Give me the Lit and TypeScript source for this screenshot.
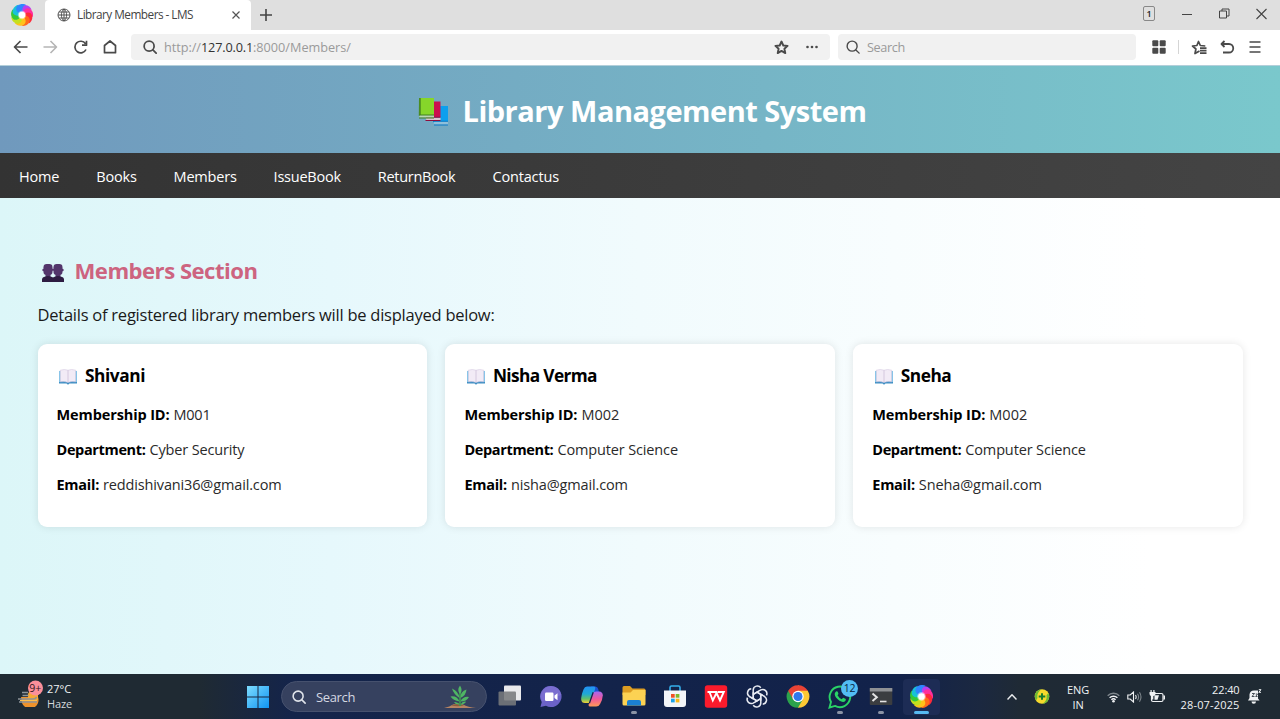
import { LitElement, html, css, svg } from "lit";
import { customElement, property } from "lit/decorators.js";

/** A single line of text whose tracking is adjusted to fill a given width. */
@customElement("fit-text")
class FitText extends LitElement {
  @property() text = "";
  @property({ type: Number }) w = 0;

  static styles = css`
    :host { display: inline-block; white-space: pre; flex: none; }
    .line { display: inline-block; }
  `;

  firstUpdated() {
    const line = this.renderRoot.querySelector(".line") as HTMLElement;
    const natural = line.getBoundingClientRect().width;
    line.style.letterSpacing = `${(this.w - natural) / this.text.length}px`;
  }

  render() {
    return html`<span class="line">${this.text}</span>`;
  }
}

const fit = (text: string, w: number) => html`<fit-text .text=${text} .w=${w}></fit-text>`;

const swirlColors = ["#b840f0", "#ff2f9c", "#ff2a3a", "#ff6a1a", "#ffc21a", "#c4e01e", "#35c93a", "#18c2d8", "#2f86ff"];
const swirl = (size: number) => html`<svg width=${size} height=${size} viewBox="0 0 24 24">
  ${swirlColors.map(
    (c, i) => svg`<path transform="rotate(${i * 40} 12 12)" fill=${c}
      d="M11 9C9 4.500 11.500 1 15.500 1.200c3.500.2 6 2.600 7 5.300-3-1.500-6-.5-7.500 3z"/>`
  )}
  <circle cx="12" cy="12" r="4.600" fill="#fff" fill-opacity=".45"/>
  <circle cx="12" cy="12" r="3.500" fill="#fff"/>
</svg>`;

const magnifier = (size: number, color: string, sw: number) => html`<svg width=${size} height=${size} viewBox="0 0 16 16"
  fill="none" stroke=${color} stroke-width=${sw} stroke-linecap="round"><circle cx="7" cy="7" r="5.700"/><path d="M11.300 11.300l3.700 3.700"/></svg>`;

const line = (w: number, h: number, d: string, color = "#4a4a4a", sw = 1.6) => html`<svg width=${w} height=${h}
  viewBox="0 0 ${w} ${h}" fill="none" stroke=${color} stroke-width=${sw} stroke-linejoin="round"><path d=${d}/></svg>`;

const openBook = html`<svg width="18" height="16" viewBox="0 0 18 16">
  <path d="M0 2h18v12.500h-7.500L9 15.800 7.500 14.500H0z" fill="#3f8fc4"/>
  <path d="M0 2h1v11H0zM17 2h1v11h-1z" fill="#7cc4ea"/>
  <path d="M1.200 1.200Q5.500-.2 9 1.200q3.500-1.400 7.800 0v11.600Q12.500 12 9 13.400 5.500 12 1.200 12.800z" fill="#f2ebf6" stroke="#cfc3dc" stroke-width=".5"/>
  <path d="M9 1.200v12" stroke="#cdbfd9" stroke-width=".8"/>
</svg>`;

const books = html`<svg width="31" height="30" viewBox="0 0 31 30">
  <path d="M15 9h15v15.500H17l-2 1z" fill="#0c9fee"/><path d="M15 24.500h15v3.200H16.500q-1.800-1.600 0-3.200z" fill="#8fbfda"/>
  <path d="M15 24.300h15M16 28h14" stroke="#0a78c4" stroke-width="1.100" fill="none"/>
  <path d="M8 4.500h14.500V20H8z" fill="#cc0f4e"/><path d="M7.500 20.500h15v2.800h-14z" fill="#dcc5d0"/>
  <path d="M8 20.300h14.500M7.500 23.500h15" stroke="#8d0e3c" stroke-width="1.100" fill="none"/>
  <path d="M1.500 1h14.500v17H1z" fill="#86d62a"/><path d="M1 1h1.800v18H.8z" fill="#4b8d22"/>
  <path d="M1.500 18h14.500v2.700H1.500z" fill="#b9d6b4"/><path d="M1 18h15M1 21h15" stroke="#3f7f22" stroke-width="1" fill="none"/>
</svg>`;

const people = html`<svg width="22" height="20" viewBox="0 0 22 20">
  <g fill="#53356b"><rect x="1.500" y="1" width="9" height="11" rx="3.200"/><rect x="11.500" y="1" width="9" height="11" rx="3.200"/>
  <circle cx="1.500" cy="7" r="1.200"/><circle cx="20.500" cy="7" r="1.200"/><path d="M9 5.700h4v2H9zM3.500 10h5v4h-5zM13.500 10h5v4h-5z"/></g>
  <path d="M0 19v-2.500Q0 14 3.500 13.400l2.500-.4 2.500.4q1.700.4 2.500 1 .8-.6 2.500-1l2.500-.4 2.500.4Q22 14 22 16.500V19z" fill="#2e1c42"/>
</svg>`;

const appIcons = {
  taskView: svg`<rect x="7" y="1.500" width="17" height="15" rx="1" fill="#e9eaec"/><rect x="1.500" y="7.500" width="17.500" height="14" rx="1" fill="#777a7c" fill-opacity=".88"/>`,
  chat: svg`<path d="M13 2a10.500 10.500 0 1 1-5 19.700L2.500 23l1.200-5A10.500 10.500 0 0 1 13 2z" fill="#6b62c8"/><path d="M13 2a10.500 10.500 0 0 1 10.300 9L4 17.500A10.500 10.500 0 0 1 13 2z" fill="#8377d6" fill-opacity=".6"/><rect x="7" y="8.500" width="8.500" height="8.500" rx="1.200" fill="#fff"/><path d="M16.500 11.500l3-2.200v7l-3-2.200z" fill="#fff"/>`,
  copilot: svg`<defs><linearGradient id="a" x1="0" y1="0" x2="0" y2="1"><stop stop-color="#2391f5"/><stop offset=".45" stop-color="#1fa9d6"/><stop offset=".75" stop-color="#62c06a"/><stop offset="1" stop-color="#f4cf35"/></linearGradient><linearGradient id="b" x1="0" y1="0" x2="0" y2="1"><stop stop-color="#a767f0"/><stop offset=".5" stop-color="#f0589a"/><stop offset="1" stop-color="#ff9a55"/></linearGradient></defs>
    <path d="M12 2.500h4.500q2 0 2.700 2.500l.8 3h-6z" fill="#1c50cf"/><path d="M8 2.500h7q1.800 0 1.200 2L12.500 17q-.8 2-2.800 2H6q-3.500 0-3.800-3.500Q2 12 4.500 5.500 5.600 2.500 8 2.500z" fill="url(#a)"/><path d="M17.200 7.500h2.900q3.700.3 3.700 4-.2 4-2.700 8.500-1.400 2.500-3.900 2.500h-6.500q-1.500 0-1-2l4-11q.8-2 3.500-2z" fill="url(#b)"/><path d="M14.200 8.300l-3.800 11" stroke="#14244a" stroke-width="1.300"/>`,
  folder: svg`<path d="M1.500 3.500q0-1.500 1.500-1.500h6l2.500 2.500H23q1.500 0 1.500 1.500v5h-23z" fill="#dd9d22"/><path d="M1.500 8.500h8l2.500-2.500h12.500v14q0 1.500-1.500 1.500H3q-1.500 0-1.500-1.500z" fill="#fcd253"/><path d="M6 21.500V18q0-2 2-2h10q2 0 2 2v3.500z" fill="#1b81d2"/>`,
  store: svg`<path d="M8 7V3.500Q8 2 9.500 2h7Q18 2 18 3.500V7" fill="none" stroke="#35aeea" stroke-width="1.600"/><path d="M2 6.500h22V20q0 3-3 3H5q-3 0-3-3z" fill="#f3f5f8"/><path d="M9 10h3.700v3.700H9z" fill="#ef5126"/><path d="M13.700 10h3.700v3.700h-3.700z" fill="#80b92b"/><path d="M9 14.700h3.700v3.700H9z" fill="#1ca3e8"/><path d="M13.700 14.700h3.700v3.700h-3.700z" fill="#fbb818"/>`,
  wps: svg`<rect x="1.800" y="1.200" width="22.400" height="22.600" rx="2.800" fill="#fb1b2c"/><path d="M4.500 8H14M6.500 8l3.300 8.500L13.500 9l3.500 7.500L20.800 8H14.500" fill="none" stroke="#fff" stroke-width="1.900"/>`,
  gpt: svg`<g fill="none" stroke="#e8ebf2" stroke-width="1.500">${[0, 60, 120, 180, 240, 300].map(
    (a) => svg`<path transform="rotate(${a} 13 12.500)" d="M9.200 10.400V5.900a4.200 4.200 0 0 1 7.600-2.200M9.200 10.400l3.800-2.200 5.600 3.200"/>`
  )}</g>`,
  chrome: svg`<path d="M13 12.500V1.200l9.800 5.600A11.300 11.300 0 0 1 13 23.800z" fill="#fcc934"/><path d="M13 12.500l4.900 2.800L13 23.800A11.300 11.300 0 0 1 3.200 6.800z" fill="#2ba24c"/><path d="M3.200 6.800A11.300 11.300 0 0 1 22.800 6.800H13l-4.900 8.500z" fill="#e94335"/><circle cx="13" cy="12.500" r="5.700" fill="#fff"/><circle cx="13" cy="12.500" r="4.500" fill="#2f78ec"/>`,
  whatsapp: svg`<path d="M2.500 23.500L4 18A10.300 10.300 0 1 1 8 21.900z" fill="none" stroke="#2ad366" stroke-width="1.900"/><path d="M9 7.500q1.300-.8 1.700.3l.7 1.700q.2.700-.9 1.800 1.700 3 4.200 4l1.500-1.600 2.600 1.300q.3 2.700-2.800 2.900Q12.500 17.600 9 13.400q-2.600-3.700 0-5.900z" fill="#2ad366"/>`,
  terminal: svg`<rect x="1.800" y="4" width="22.500" height="17" rx="1" fill="#3b3d40"/><path d="M1.800 4h22.500v3.500H1.800z" fill="#8f9194"/><path d="M4.500 9.500l4.300 3.700-4.300 3.700" fill="none" stroke="#e4e4e4" stroke-width="2"/><path d="M12 17.500h6.500" stroke="#e4e4e4" stroke-width="1.600"/>`,
};

const app = (art: unknown) => html`<svg width="26" height="25" viewBox="0 0 26 25">${art}</svg>`;

interface Member { name: string; nameW: number; id: string; idW: number; dept: string; deptW: number; mail: string; mailW: number; }

const members: Member[] = [
  { name: "Shivani", nameW: 60, id: "M001", idW: 37, dept: "Cyber Security", deptW: 95, mail: "reddishivani36@gmail.com", mailW: 178.5 },
  { name: "Nisha Verma", nameW: 104, id: "M002", idW: 38, dept: "Computer Science", deptW: 120.5, mail: "nisha@gmail.com", mailW: 117 },
  { name: "Sneha", nameW: 50.5, id: "M002", idW: 38, dept: "Computer Science", deptW: 120.5, mail: "Sneha@gmail.com", mailW: 123 },
];

const navLinks: [string, number][] = [
  ["Home", 40.3], ["Books", 40.3], ["Members", 63], ["IssueBook", 67.2], ["ReturnBook", 77.6], ["Contactus", 66.5],
];

@customElement("browser-bar")
class BrowserBar extends LitElement {
  static styles = css`
    :host { display: block; height: 66px; background: #fff; color: #444; font-size: 11.800px; flex: none; }
    svg { display: block; flex: none; }
    .row { display: flex; align-items: center; }
    .tabs { height: 30px; background: #dfdfdf; }
    .logo { width: 45px; height: 30px; justify-content: center; }
    .logo svg { margin: -1px 1px 0 0; }
    .tab { width: 206px; height: 30px; background: #fff; border-radius: 4px 4px 0 0; box-sizing: border-box; padding: 0 10px 0 12px; }
    .title { flex: 1; margin-left: 6px; line-height: 29px; height: 30px; }
    .plus { margin-left: 9px; flex: 1; }
    .window { gap: 27px; padding-right: 13px; margin-top: -3px; }
    .window svg:nth-child(2), .window svg:nth-child(3) { margin-right: -0.500px; }
    .count { width: 10px; height: 13px; border: 1px solid #888; border-radius: 2px; text-align: center; font-size: 9px; font-weight: 600; color: #222; line-height: 14px; }
    .tools { height: 34px; }
    .nav { gap: 15px; padding-left: 13px; width: 118px; box-sizing: border-box; }
    .field { height: 26px; background: #f1f1f1; border-radius: 4px; box-sizing: border-box; font-size: 12.700px; color: #9a9a9a; }
    .url { width: 699px; margin-left: 13px; padding: 0 11px 0 12px; }
    .address { flex: 1; margin-left: 7px; line-height: 25px; white-space: nowrap; }
    .host { color: #333; }
    .url .star { margin-right: 16px; }
    .search { width: 298px; margin-left: 8px; padding-left: 8px; gap: 7px; }
    .actions { flex: 1; padding-left: 16px; }
    .divider { width: 1px; height: 14px; background: #d5d5d5; margin: 0 12px 0 12px; }
    .actions .fav { margin-right: 13px; } .actions .undo { margin-right: 14px; }
    .edge { height: 1px; background: #b3cfda; margin-top: 1px; }
  `;
  render() {
    return html`
      <div class="row tabs">
        <div class="row logo">${swirl(22)}</div>
        <div class="row tab">
          ${line(14, 14, "M7 1a6 6 0 1 0 0 12A6 6 0 1 0 7 1M7 1C3.500 4 3.500 10 7 13 10.500 10 10.500 4 7 1M7 1v12M1 7h12M2 4h10M2 10h10", "#555", 1)}
          <div class="title">${fit("Library Members - LMS", 116)}</div>
          ${line(10, 10, "M1.500 1.500l7 7M8.500 1.500l-7 7", "#555", 1.2)}
        </div>
        <div class="plus">${line(12, 12, "M6 0v12M0 6h12", "#444", 1.6)}</div>
        <div class="row window">
          <div class="count">1</div>
          ${line(10, 10, "M0 5.500h10", "#444", 1)}
          ${line(11, 11, "M.5 3h7v7h-7zM3 3V1h7v7H7.500", "#444", 1)}
          ${line(11, 12, "M.5 1l10 10M10.500 1l-10 10", "#444", 1.1)}
        </div>
      </div>
      <div class="row tools">
        <div class="row nav">
          ${line(15, 14, "M14.500 7H1.500M7.500 1L1.500 7l6 6", "#4a4a4a", 1.7)}
          ${line(15, 14, "M.5 7h13M7.500 1l6 6-6 6", "#b5b5b5")}
          ${line(15, 14, "M12.500 3.700A5.800 5.800 0 1 0 13 9.500M13.500.8v4.400H9", "#4a4a4a", 1.7)}
          ${line(14, 14, "M1.500 12.700V5.500L7 1l5.500 4.500v7.200z", "#4a4a4a", 1.7)}
        </div>
        <div class="row field url">
          ${magnifier(14, "#4a4a4a", 2)}
          <div class="address">${fit("http://", 37)}<span class="host">${fit("127.0.0.1", 52)}</span>${fit(":8000/Members/", 98)}</div>
          <div class="star">${line(15, 15, "M7.500 1.500l1.800 4 4.300.4-3.200 2.900.9 4.300-3.800-2.200-3.800 2.200.9-4.300L1.400 5.900l4.300-.4z", "#4a4a4a", 1.9)}</div>
          <svg width="14" height="4" viewBox="0 0 14 4" fill="#4a4a4a"><circle cx="2.500" cy="2" r="1.300"/><circle cx="7" cy="2" r="1.300"/><circle cx="11.500" cy="2" r="1.300"/></svg>
        </div>
        <div class="row field search">${magnifier(14, "#4a4a4a", 1.6)} ${fit("Search", 38)}</div>
        <div class="row actions">
          <svg width="14" height="14" viewBox="0 0 14 14" fill="#4a4a4a"><rect x=".3" y=".3" width="6" height="6" rx="1"/><rect x="7.700" y=".3" width="6" height="6" rx="1"/><rect x=".3" y="7.700" width="6" height="6" rx="1"/><rect x="7.700" y="7.700" width="6" height="6" rx="1"/></svg>
          <div class="divider"></div>
          <div class="fav">${line(16, 15, "M8.500 11L4 13.500l.9-4.500L1.500 6l4.400-.5L7.500 1.500l1.800 4 5 .5M9 8.200h6.500M9 10.700h6.500M9 13.200h6.500", "#4a4a4a", 1.7)}</div>
          <div class="undo">${line(15, 14, "M4.500 1L1.500 4l3 3M1.500 4H9a4.200 4.200 0 0 1 0 8.500H3", "#4a4a4a", 1.8)}</div>
          ${line(12, 12, "M.5 1h11M.5 6h11M.5 11h11", "#4a4a4a", 1.6)}
        </div>
      </div>
      <div class="edge"></div>`;
  }
}

@customElement("member-card")
class MemberCard extends LitElement {
  @property({ attribute: false }) member!: Member;
  static styles = css`
    :host { display: block; background: #fff; border-radius: 9px; box-shadow: 0 0 9px rgba(0, 0, 0, 0.1); padding: 18px 19px 0; height: 182.500px; box-sizing: border-box; font-size: 14.500px; color: #000; }
    .name { display: flex; align-items: center; gap: 8px; height: 27px; padding-left: 2.500px; font-size: 17.300px; font-weight: 700; line-height: 28px; margin-bottom: 9px; }
    .name svg { margin-top: 2px; }
    .field { display: flex; gap: 4px; height: 35px; line-height: 34px; color: #2a2a2a; }
    .key { font-weight: 700; color: #000; }
  `;
  render() {
    const m = this.member;
    return html`
      <div class="name">${openBook}${fit(m.name, m.nameW)}</div>
      <div class="field"><span class="key">${fit("Membership ID:", 113)}</span>${fit(m.id, m.idW)}</div>
      <div class="field"><span class="key">${fit("Department:", 89)}</span>${fit(m.dept, m.deptW)}</div>
      <div class="field"><span class="key">${fit("Email:", 42.5)}</span>${fit(m.mail, m.mailW)}</div>`;
  }
}

@customElement("task-bar")
class TaskBar extends LitElement {
  static styles = css`
    :host { display: flex; height: 45px; flex: none; color: #f0f2f4; font-size: 11px; background: linear-gradient(90deg, #1f2a33 0, #1f2a33 200px, #14244a 290px, #12224a 900px, #1b2840 980px, #1f2a35 1020px, #1f2a33); align-items: center; }
    svg { display: block; flex: none; }
    .weather { display: flex; width: 246px; box-sizing: border-box; padding-left: 17px; gap: 4px; align-items: center; }
    .weather svg { margin-top: -8px; }
    .stack { display: flex; flex-direction: column; line-height: 15px; margin-top: -1px; }
    .right { align-items: flex-end; } .mid { align-items: center; }
    .haze { color: #d5d9dc; }
    .pill { display: flex; align-items: center; width: 206px; height: 31px; box-sizing: border-box; margin: 0 2.500px 0 11px; border: 1px solid #46516e; border-radius: 16px; background: #36415f; padding: 0 9px 0 10px; gap: 10px; font-size: 13px; line-height: 28px; color: #d4d8e2; }
    .grow { flex: 1; }
    .app { width: 41.200px; height: 45px; display: flex; align-items: center; justify-content: center; position: relative; flex: none; }
    .run::after, .active::after { content: ""; position: absolute; bottom: 5px; left: 18px; width: 6px; height: 3px; border-radius: 2px; background: #8b93a5; }
    .active::after { left: 13px; width: 15px; background: #56b9f2; }
    .tile { width: 37px; height: 36px; border-radius: 4px; background: #1d2c55; display: flex; align-items: center; justify-content: center; }
    .badge { position: absolute; left: 22px; top: 6px; width: 17px; height: 17px; border-radius: 9px; background: #52bdf5; color: #0b2440; text-align: center; font-size: 10.500px; line-height: 16px; letter-spacing: -0.300px; }
    .tray { display: flex; align-items: center; flex: 1; padding-left: 64.500px; }
    .up { margin-right: 17px; } .lang { margin: 0 17px 0 16px; width: 24px; }
    .icons { display: flex; gap: 7px; align-items: center; width: 76px; }
    .clock { width: 58px; margin: 0 7.500px 0 -1.500px; }
  `;
  render() {
    return html`
      <div class="weather">
        <svg width="26" height="28" viewBox="0 0 26 28"><path d="M4 18h17a8.500 8.500 0 0 1-16 6z" fill="#ee922c"/><path d="M11 18a5 5 0 0 1 10-3v6H11z" fill="#f7a936"/><path d="M5 13.500h6M5.500 16.500h6M1 20h15q3 0 3.500-2M2 23h18" stroke="#8d9499" stroke-width="1.400" fill="none"/><path d="M3 21.500h17" stroke="#ffc04b" stroke-width="1"/><circle cx="18.500" cy="9" r="7.500" fill="#fb8f9a"/><text x="18.300" y="12.800" font-size="10.500" text-anchor="middle" fill="#33161c" font-family="Open Sans">9+</text></svg>
        <div class="stack">${fit("27°C", 24)}<span class="haze">${fit("Haze", 25)}</span></div>
      </div>
      <svg width="24" height="24" viewBox="0 0 24 24"><defs><linearGradient id="w" x1="0" y1="0" x2="1" y2="1"><stop stop-color="#7ddcff"/><stop offset="1" stop-color="#0f94f2"/></linearGradient></defs><path d="M1 1h10.500v10.500H1zM12.500 1H23v10.500H12.500zM1 12.500h10.500V23H1zM12.500 12.500H23V23H12.500z" fill="url(#w)"/></svg>
      <div class="pill">
        ${magnifier(14, "#dfe3ea", 1.8)}
        <span class="grow">${fit("Search", 39)}</span>
        <svg width="34" height="25" viewBox="0 0 34 25"><path d="M1 24q6-1.500 9-3.500 6-2 10 0 5 2.500 13 3.500z" fill="#b88462"/><path d="M8 21.500q9-3.500 13 0-6 1.500-13 0z" fill="#8b5a3c"/><path d="M17 22V6" stroke="#3b9150" stroke-width="1.800"/><g fill="#4fb564"><path d="M17 10q-3.400-4 0-8.500 3.200 5 0 8.500zM16.500 14Q10.500 10 9 4.500 15.800 7.500 16.500 14zM17.500 14q-.5-6.500 6-8.500-.5 6-6 8.500zM16.500 17.500q-6.500-1-9-5 6.500-1 9 5zM17.500 17.500q2.500-5.500 8.500-4.500-2.500 4.500-8.500 4.500zM16.700 20.500q-4 .5-5.700-2.500 3.500-.5 5.700 2.500zM17.500 20.500q2-3.500 5.500-2.800-1.500 2.800-5.500 2.800z"/></g></svg>
      </div>
      <div class="app">${app(appIcons.taskView)}</div>
      <div class="app">${app(appIcons.chat)}</div>
      <div class="app">${app(appIcons.copilot)}</div>
      <div class="app run">${app(appIcons.folder)}</div>
      <div class="app">${app(appIcons.store)}</div>
      <div class="app">${app(appIcons.wps)}</div>
      <div class="app">${app(appIcons.gpt)}</div>
      <div class="app">${app(appIcons.chrome)}</div>
      <div class="app run">${app(appIcons.whatsapp)}<span class="badge">12</span></div>
      <div class="app run">${app(appIcons.terminal)}</div>
      <div class="app active"><div class="tile">${swirl(23)}</div></div>
      <div class="tray">
        <div class="up">${line(10, 8, "M.5 6.500L5 1.800l4.500 4.700", "#e8eaec", 1.5)}</div>
        <svg width="16" height="15" viewBox="0 0 15 15"><circle cx="7.500" cy="7.500" r="7.300" fill="#f6d92c"/><path d="M1.500 11.500A7.300 7.300 0 0 1 7 .2Q2 3.500 3 9zM13.800 4A7.300 7.300 0 0 1 8 14.800q5-3 4-8.500z" fill="#6cbb35"/><path d="M7.500 4.200v6.600M4.200 7.500h6.600" stroke="#187c2e" stroke-width="2"/></svg>
        <div class="stack mid lang">${fit("ENG", 22)}${fit("IN", 11)}</div>
        <div class="icons">
          <svg width="13" height="12" viewBox="0 0 13 12" fill="none" stroke-width="1.400"><path d="M.7 4.700a8.200 8.200 0 0 1 11.600 0" stroke="#7f878d"/><path d="M2.600 6.800a5.500 5.500 0 0 1 7.800 0M4.400 8.800a3 3 0 0 1 4.200 0" stroke="#f0f2f4"/><circle cx="6.500" cy="10.300" r="1.300" fill="#f0f2f4"/></svg>
          <svg width="15" height="12" viewBox="0 0 15 12" fill="none" stroke="#f0f2f4" stroke-width="1.100"><path d="M.8 4h2.400L6.500 1v10L3.200 8H.8zM8.500 4q1.300 2 0 4"/><path d="M10.500 2.700q2.200 3.300 0 6.600M12.500 1.300q3 4.700 0 9.400" stroke="#7f878d"/></svg>
          <svg width="17" height="13" viewBox="0 0 17 13"><rect x="2.500" y="3.500" width="11.500" height="8" rx="1.500" fill="none" stroke="#f0f2f4" stroke-width="1.200"/><path d="M5.500 5.300h4.500L8.500 9.800h-3zM14.500 5.500h1.500v4h-1.500z" fill="#f0f2f4"/><path d="M1.500 0h1.200v2h1.600V0h1.200v2h1v2q0 1.800-2.200 2v3.500H2.800V6Q.5 5.800.5 4V2h1z" fill="#f0f2f4"/></svg>
        </div>
        <div class="stack right clock">${fit("22:40", 27.5)}${fit("28-07-2025", 59)}</div>
        <svg width="15" height="15" viewBox="0 0 15 15"><path d="M1 11.500l1.500-2.500V5.500A4.700 4.700 0 0 1 7 1.500h4v8l1.500 2zM4.500 12.500h4.500a2.200 2.200 0 0 1-4.500 0z" fill="#f0f2f4"/><path d="M5 4.500h2.500L5 7.500h2.500M8.700 5h1.800L8.700 7.500h1.800" stroke="#1f2a33" stroke-width=".8" fill="none"/><path d="M11.800.7h2.200l-2.200 2.600h2.200" stroke="#f0f2f4" fill="none"/></svg>
      </div>`;
  }
}

@customElement("app-root")
class AppRoot extends LitElement {
  static styles = css`
    :host { display: flex; flex-direction: column; width: 1280px; height: 719px; overflow: hidden; font-family: "Open Sans", "Noto Sans", sans-serif; background: #fff; }
    svg { display: block; flex: none; }
    .banner { height: 86.500px; flex: none; display: flex; align-items: center; justify-content: center; gap: 14px; padding: 3px 0 0 4px; box-sizing: border-box; color: #fff; font-size: 29px; font-weight: 700; background: linear-gradient(90deg, #7099bd, #7ac8cc); }
    .banner svg { margin-top: 2px; }
    .menu { height: 45.500px; flex: none; display: flex; align-items: center; gap: 37px; padding: 1.500px 19px 0; box-sizing: border-box; background: linear-gradient(90deg, #333, #444); color: #fff; font-size: 14.500px; }
    .page { flex: 1; padding: 54px 37.500px 0; background: linear-gradient(90deg, #dcf6f8 0, #e6f8fc 330px, #f1fbfd 640px, #fff 1150px); }
    .heading { display: flex; align-items: center; gap: 11px; height: 36px; padding-left: 4px; color: #cd6480; font-size: 22.100px; font-weight: 700; }
    .heading svg { margin-top: 5px; }
    .intro { height: 30px; line-height: 30px; margin: 12px 0 14.300px; font-size: 16.500px; color: #1a1a1a; }
    .cards { display: grid; grid-template-columns: repeat(3, 1fr); gap: 18.700px; }
  `;
  render() {
    return html`
      <browser-bar></browser-bar>
      <header class="banner">${books}${fit("Library Management System", 404)}</header>
      <nav class="menu">${navLinks.map(([t, w]) => fit(t, w))}</nav>
      <main class="page">
        <div class="heading">${people}${fit("Members Section", 183)}</div>
        <div class="intro">${fit("Details of registered library members will be displayed below:", 457)}</div>
        <div class="cards">${members.map((m) => html`<member-card .member=${m}></member-card>`)}</div>
      </main>
      <task-bar></task-bar>`;
  }
}
